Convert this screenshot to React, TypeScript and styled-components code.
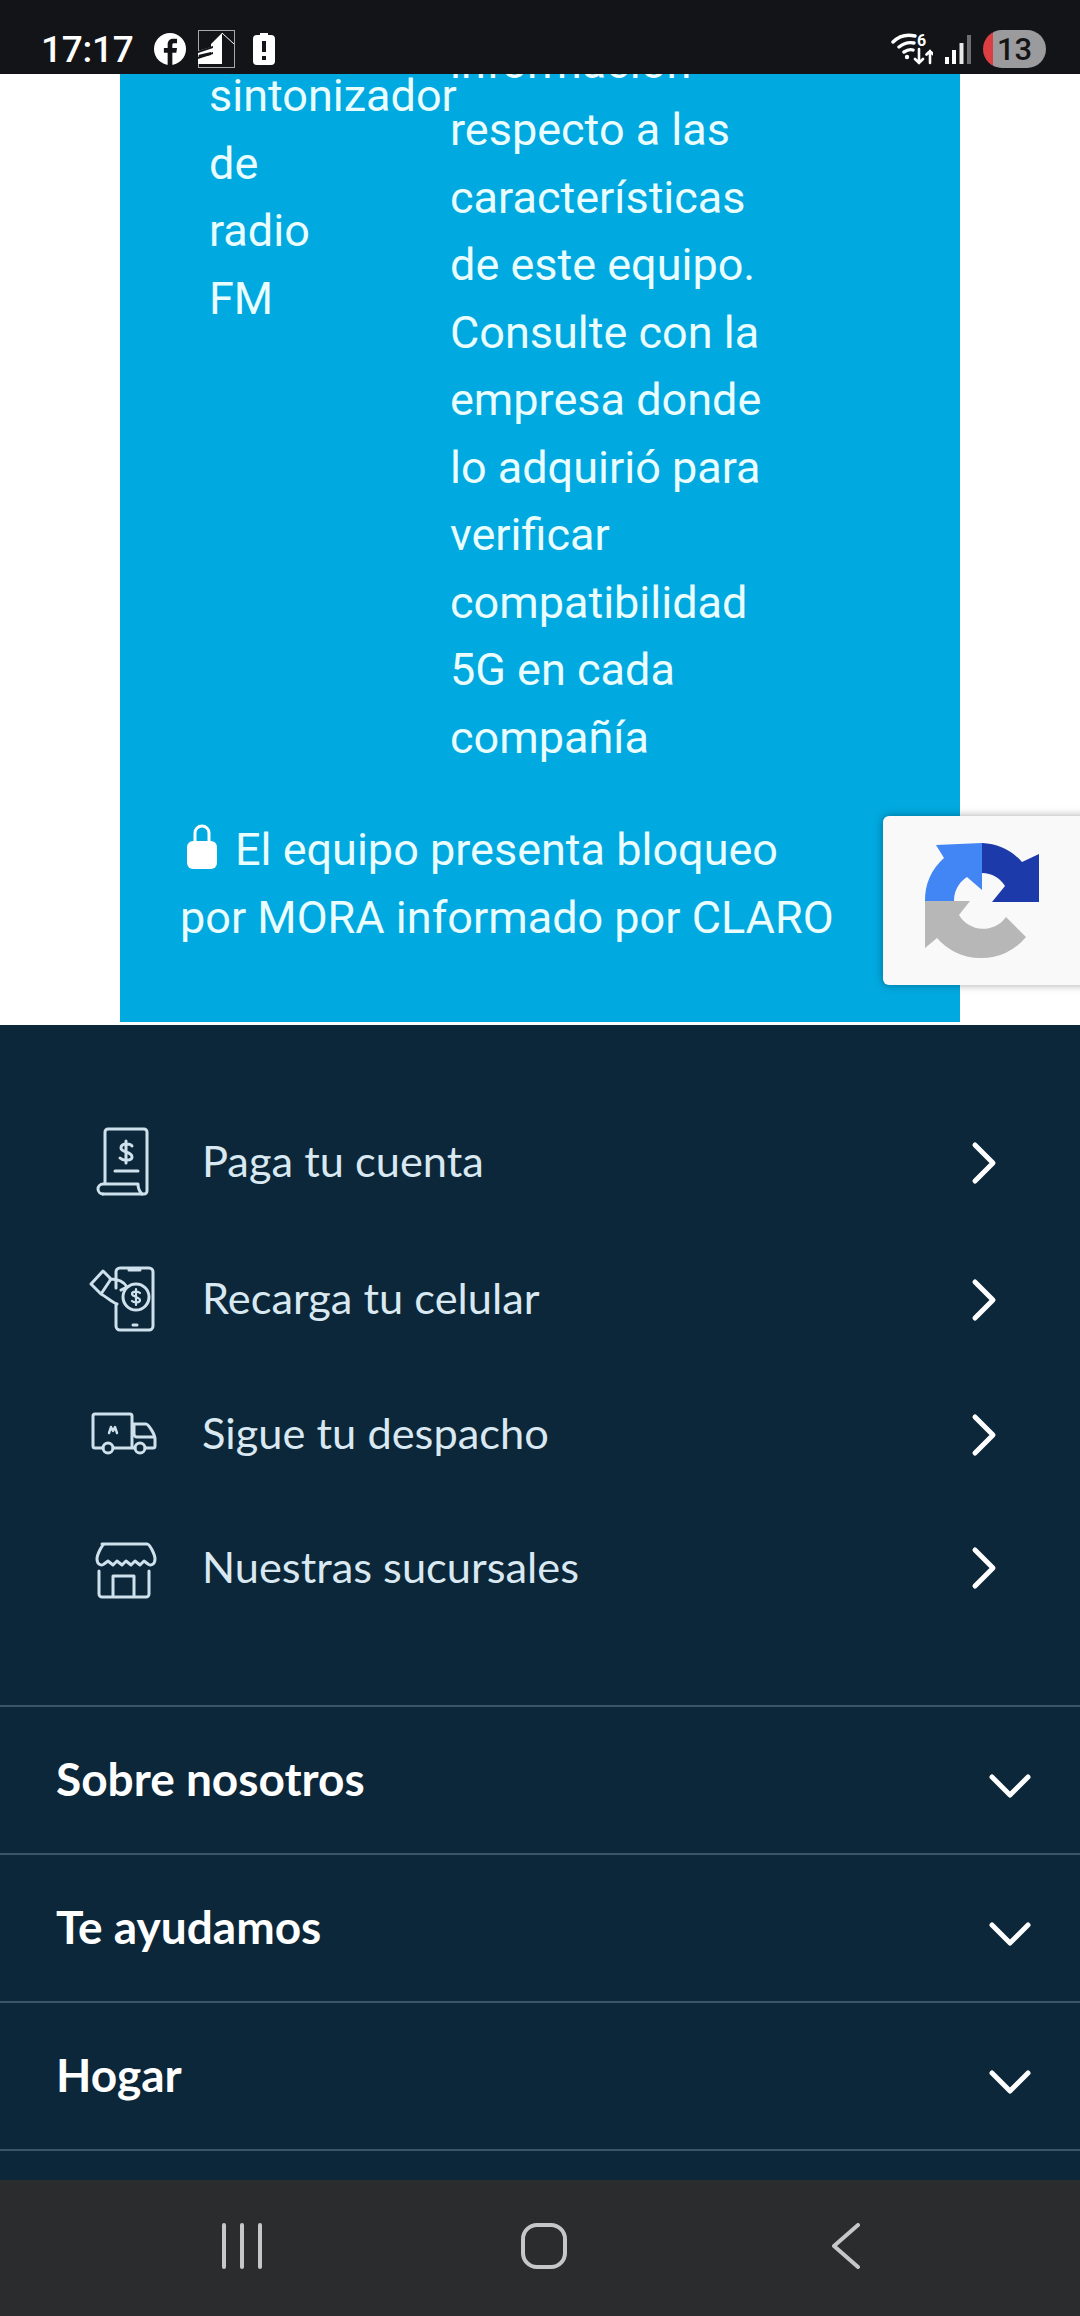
import React from "react";
import styled, { createGlobalStyle } from "styled-components";

const Global = createGlobalStyle`
  html, body { margin: 0; padding: 0; background: #fff; }
  * { box-sizing: border-box; }
`;

const Screen = styled.div`
  width: 1080px;
  height: 2316px;
  display: flex;
  flex-direction: column;
  overflow: hidden;
  position: relative;
`;

const StatusBar = styled.header`
  height: 74px;
  flex: none;
  background: #131417;
  color: #fff;
  display: flex;
  align-items: center;
  justify-content: space-between;
  padding: 24px 34px 0 41px;
  font-family: "Roboto", sans-serif;
  position: relative;
  z-index: 2;
`;

const StatusGroup = styled.div`
  display: flex;
  align-items: center;
`;

const Clock = styled.span`
  font-size: 37px;
  font-weight: 500;
  margin-right: 21px;
  letter-spacing: -0.3px;
`;

const StatusIcon = styled.svg<{ $gap: number }>`
  flex: none;
  display: block;
  margin-right: ${(p) => p.$gap}px;
`;

const Badge = styled.span`
  width: 63px;
  height: 38px;
  border-radius: 19px;
  background: linear-gradient(90deg, #dc3f43 0 10px, #9b9b9d 10px);
  color: #141414;
  font-size: 31px;
  font-weight: 500;
  display: flex;
  align-items: center;
  justify-content: center;
`;

const Viewport = styled.main`
  flex: none;
  height: 951px;
  overflow: hidden;
  background: #fff;
  position: relative;
`;

const Panel = styled.section`
  width: 840px;
  height: 948px;
  margin-left: 120px;
  background: #00a9e0;
  color: #eafdff;
  font-family: "Roboto", sans-serif;
  font-size: 45px;
  line-height: 67.5px;
  overflow: hidden;
`;

const SpecRow = styled.div`
  display: grid;
  grid-template-columns: 241px 330px;
  margin: -12px 0 0 89px;
`;

const SpecCol = styled.div``;

const ClippedWord = styled.div`
  margin-top: -33.5px;
`;

const LockNote = styled.p`
  width: 660px;
  margin: 45px 0 0 60px;
`;

const LockGlyph = styled.svg`
  width: 30px;
  height: 46px;
  vertical-align: -4px;
  margin: 0 18px 0 7px;
`;

const Recaptcha = styled.aside`
  position: absolute;
  left: 883px;
  top: 742px;
  width: 220px;
  height: 169px;
  background: #f9f9f9;
  border-radius: 6px;
  box-shadow: 0 0 8px rgba(0, 0, 0, 0.35);
`;

const RecaptchaLogo = styled.svg`
  display: block;
  width: 220px;
  height: 169px;
`;

const Footer = styled.footer`
  flex: none;
  height: 1155px;
  background: #0b2739;
  color: #fff;
  font-family: "Lato", "Open Sans", sans-serif;
`;

const QuickLinks = styled.nav`
  height: 682px;
  padding-top: 69px;
  border-bottom: 2px solid #3a5569;
`;

const QuickLink = styled.a<{ $height: number }>`
  display: flex;
  align-items: center;
  height: ${(p) => p.$height}px;
  padding: 0 80px 0 83px;
  color: #d9e8f1;
  font-size: 43.4px;
`;

const QuickIcon = styled.svg`
  width: 84px;
  height: 84px;
  flex: none;
  margin-right: 35px;
  fill: none;
  stroke: #cfe1ec;
  stroke-width: 3;
  stroke-linecap: round;
  stroke-linejoin: round;
`;

const QuickLabel = styled.span`
  flex: 1;
  margin-bottom: 5px;
`;

const Chevron = styled.svg`
  width: 30px;
  height: 44px;
  flex: none;
  fill: none;
  stroke: #fff;
  stroke-width: 5;
  stroke-linecap: round;
  stroke-linejoin: round;
`;

const AccordionRow = styled.div`
  height: 148px;
  border-bottom: 2px solid #3a5569;
  display: flex;
  align-items: center;
  justify-content: space-between;
  padding: 0 49px 0 56px;
  font-size: 46px;
  font-weight: 700;
`;

const AccordionLabel = styled.span`
  margin-bottom: 3px;
`;

const ChevronDown = styled.svg`
  width: 42px;
  height: 28px;
  margin-top: 12px;
  fill: none;
  stroke: #fff;
  stroke-width: 5;
  stroke-linecap: round;
  stroke-linejoin: round;
`;

const FooterRest = styled.div`
  height: 29px;
`;

const NavBar = styled.div`
  flex: none;
  height: 136px;
  background: #2b2c2e;
  padding: 43px 0 0 222px;
  display: flex;
  align-items: flex-start;
`;

const NavIcon = styled.svg<{ $gap: number }>`
  height: 46px;
  margin-right: ${(p) => p.$gap}px;
  fill: none;
  stroke: #c6c7c9;
  stroke-width: 4;
  stroke-linecap: round;
  stroke-linejoin: round;
`;

const links = [
  { label: "Paga tu cuenta", height: 137, icon: (
    <>
      <path d="M22 62V11a3 3 0 0 1 3-3h36a3 3 0 0 1 3 3v59a3 3 0 0 1-3 3H20" />
      <path d="M20 63h35c0 4 1 7 4 10M20 63a5 5 0 0 0 0 10" />
      <path d="M49 25c-2-3-11-3-11 2s11 3 11 9c0 4-9 4-12 1M43 20v22M32 50h23" />
    </>
  ) },
  { label: "Recarga tu celular", height: 137, icon: (
    <>
      <path d="M33 30V14a4 4 0 0 1 4-4h29a4 4 0 0 1 4 4v54a4 4 0 0 1-4 4H37a4 4 0 0 1-4-4V47M46 12h11M50 67h4" />
      <path d="M8 26 20 13l8 8-10 15zM27 21c6 0 13 1 17 8l-6 3M18 36c6 3 10 8 16 10" />
      <circle cx="53" cy="39" r="13" />
      <path d="M57 35c-2-2-8-2-8 1s8 3 8 6-6 3-8 1M53 31v16" strokeWidth="2.2" />
    </>
  ) },
  { label: "Sigue tu despacho", height: 133, icon: (
    <>
      <path d="M20 55h-8a2 2 0 0 1-2-2V23a2 2 0 0 1 2-2h35a2 2 0 0 1 2 2v32H30M49 31h14c2 0 9 10 9 15v7a2 2 0 0 1-2 2h-8M52 55h-3" />
      <path d="M51 32v9a3 3 0 0 0 3 3h17" />
      <circle cx="25" cy="55" r="5" />
      <circle cx="57" cy="55" r="5" />
      <path d="m26 40 2-6 2 4 2-4 2 6" strokeWidth="2.4" />
    </>
  ) },
  { label: "Nuestras sucursales", height: 134, icon: (
    <>
      <path d="M19 18h45c3 0 8 11 8 15 0 6-5 7-7 5l-4-3-4 4-5-4-4 4-5-4-4 4-5-4-4 4-5-4-4 3c-2 2-7 1-7-5 0-4 5-15 8-15z" />
      <path d="M16 45v23a3 3 0 0 0 3 3h44a3 3 0 0 0 3-3V45M30 71V50h21v21" />
    </>
  ) },
];

const sections = ["Sobre nosotros", "Te ayudamos", "Hogar"];

export default function App() {
  return (
    <Screen>
      <Global />
      <StatusBar>
        <StatusGroup>
          <Clock>17:17</Clock>
          <StatusIcon $gap={12} width="32" height="32" viewBox="0 0 34 34">
            <circle cx="17" cy="17" r="17" fill="#fff" />
            <path d="M14.500 34V21h-4v-5h4v-4c0-4 2.500-6 6-6h4v5h-3c-1.500 0-2 .7-2 2v3h5l-.8 5h-4.200v13z" fill="#131417" />
          </StatusIcon>
          <StatusIcon $gap={18} width="37" height="38" viewBox="0 0 37 38">
            <rect x=".5" y=".5" width="36" height="37" fill="none" stroke="#a8a8a8" />
            <path d="M24 3v31H0v-6l13-3V22L0 25v-4l13-4v-3l11-11z" fill="#fff" />
            <path d="m24 3 12 11" stroke="#fff" fill="none" />
            <path d="M0 21l15-5v2L0 23zM0 27l15-5v2L0 29z" fill="#131417" />
          </StatusIcon>
          <StatusIcon $gap={0} width="22" height="32" viewBox="0 0 22 32">
            <path d="M7 0h8v2h3a4 4 0 0 1 4 4v22a4 4 0 0 1-4 4H4a4 4 0 0 1-4-4V6a4 4 0 0 1 4-4h3z" fill="#fff" />
            <path d="M11 8v11M11 23v4" stroke="#131417" strokeWidth="4" />
          </StatusIcon>
        </StatusGroup>
        <StatusGroup>
          <StatusIcon $gap={11} width="42" height="32" viewBox="0 0 42 32" fill="none" stroke="#fff" strokeLinecap="round">
            <path d="M2 9C8 3 16 1 24 3M8 14c5-4 10-5 15-4M13 19c3-2 6-3 9-2" strokeWidth="3.400" />
            <circle cx="16" cy="24" r="2.200" fill="#fff" stroke="none" />
            <path d="M28 16v14m-4-4 4 4 4-4M39 30V18m-3.500 3.500 3.500-3.500 3.500 3.500" strokeWidth="2.600" />
            <text x="26" y="13" fill="#fff" stroke="none" fontFamily="Roboto, sans-serif" fontSize="16" fontWeight="700">6</text>
          </StatusIcon>
          <StatusIcon $gap={12} width="27" height="29" viewBox="0 0 27 29">
            <rect x="1" y="22" width="4" height="7" fill="#fff" />
            <rect x="8" y="15" width="4" height="14" fill="#fff" />
            <rect x="15.500" y="8" width="4" height="21" fill="#e8e8e8" />
            <rect x="23" y="0" width="4" height="29" fill="#6e6e6e" />
          </StatusIcon>
          <Badge>13</Badge>
        </StatusGroup>
      </StatusBar>

      <Viewport>
        <Panel>
          <SpecRow>
            <SpecCol>
              sintonizador<br />de<br />radio<br />FM
            </SpecCol>
            <SpecCol>
              <ClippedWord>información</ClippedWord>
              respecto a las<br />características<br />de este equipo.<br />Consulte con la<br />empresa donde<br />lo adquirió para<br />verificar<br />compatibilidad<br />5G en cada<br />compañía
            </SpecCol>
          </SpecRow>
          <LockNote>
            <LockGlyph viewBox="0 0 30 46">
              <path d="M8 20V10a7 7 0 0 1 14 0v10" fill="none" stroke="#fff" strokeWidth="3" />
              <rect y="18" width="30" height="28" rx="6" fill="#fff" />
            </LockGlyph>
            El equipo presenta bloqueo por MORA informado por CLARO
          </LockNote>
        </Panel>
        <Recaptcha>
          <RecaptchaLogo viewBox="0 0 220 169">
            <path d="M42 85A57 57 0 0 1 61 42L53 29 99 27v47L84 61A28 28 0 0 0 71 85z" fill="#4285f4" />
            <path d="M99 27a57 57 0 0 1 40 19l17-8v48h-47l13-16A28 28 0 0 0 99 57z" fill="#1c3aaa" />
            <path d="M42 85h45L76 99a28 28 0 0 0 47 2l20 20a57 57 0 0 1-46 21 57 57 0 0 1-43-20L42 132z" fill="#b7b7b7" />
          </RecaptchaLogo>
        </Recaptcha>
      </Viewport>

      <Footer>
        <QuickLinks>
          {links.map((l) => (
            <QuickLink key={l.label} $height={l.height}>
              <QuickIcon viewBox="0 0 84 84">{l.icon}</QuickIcon>
              <QuickLabel>{l.label}</QuickLabel>
              <Chevron viewBox="0 0 30 44"><path d="M5 4l18 18L5 40" /></Chevron>
            </QuickLink>
          ))}
        </QuickLinks>
        {sections.map((s) => (
          <AccordionRow key={s}>
            <AccordionLabel>{s}</AccordionLabel>
            <ChevronDown viewBox="0 0 42 28"><path d="M3 5l18 18L39 5" /></ChevronDown>
          </AccordionRow>
        ))}
        <FooterRest />
      </Footer>

      <NavBar>
        <NavIcon $gap={259} width="40" viewBox="0 0 40 46">
          <path d="M2 2v42M20 2v42M38 2v42" />
        </NavIcon>
        <NavIcon $gap={264} width="46" viewBox="0 0 46 46">
          <rect x="2" y="2" width="42" height="42" rx="14" />
        </NavIcon>
        <NavIcon $gap={0} width="30" viewBox="0 0 30 46">
          <path d="M27 2 3 23l24 21" />
        </NavIcon>
      </NavBar>
    </Screen>
  );
}
